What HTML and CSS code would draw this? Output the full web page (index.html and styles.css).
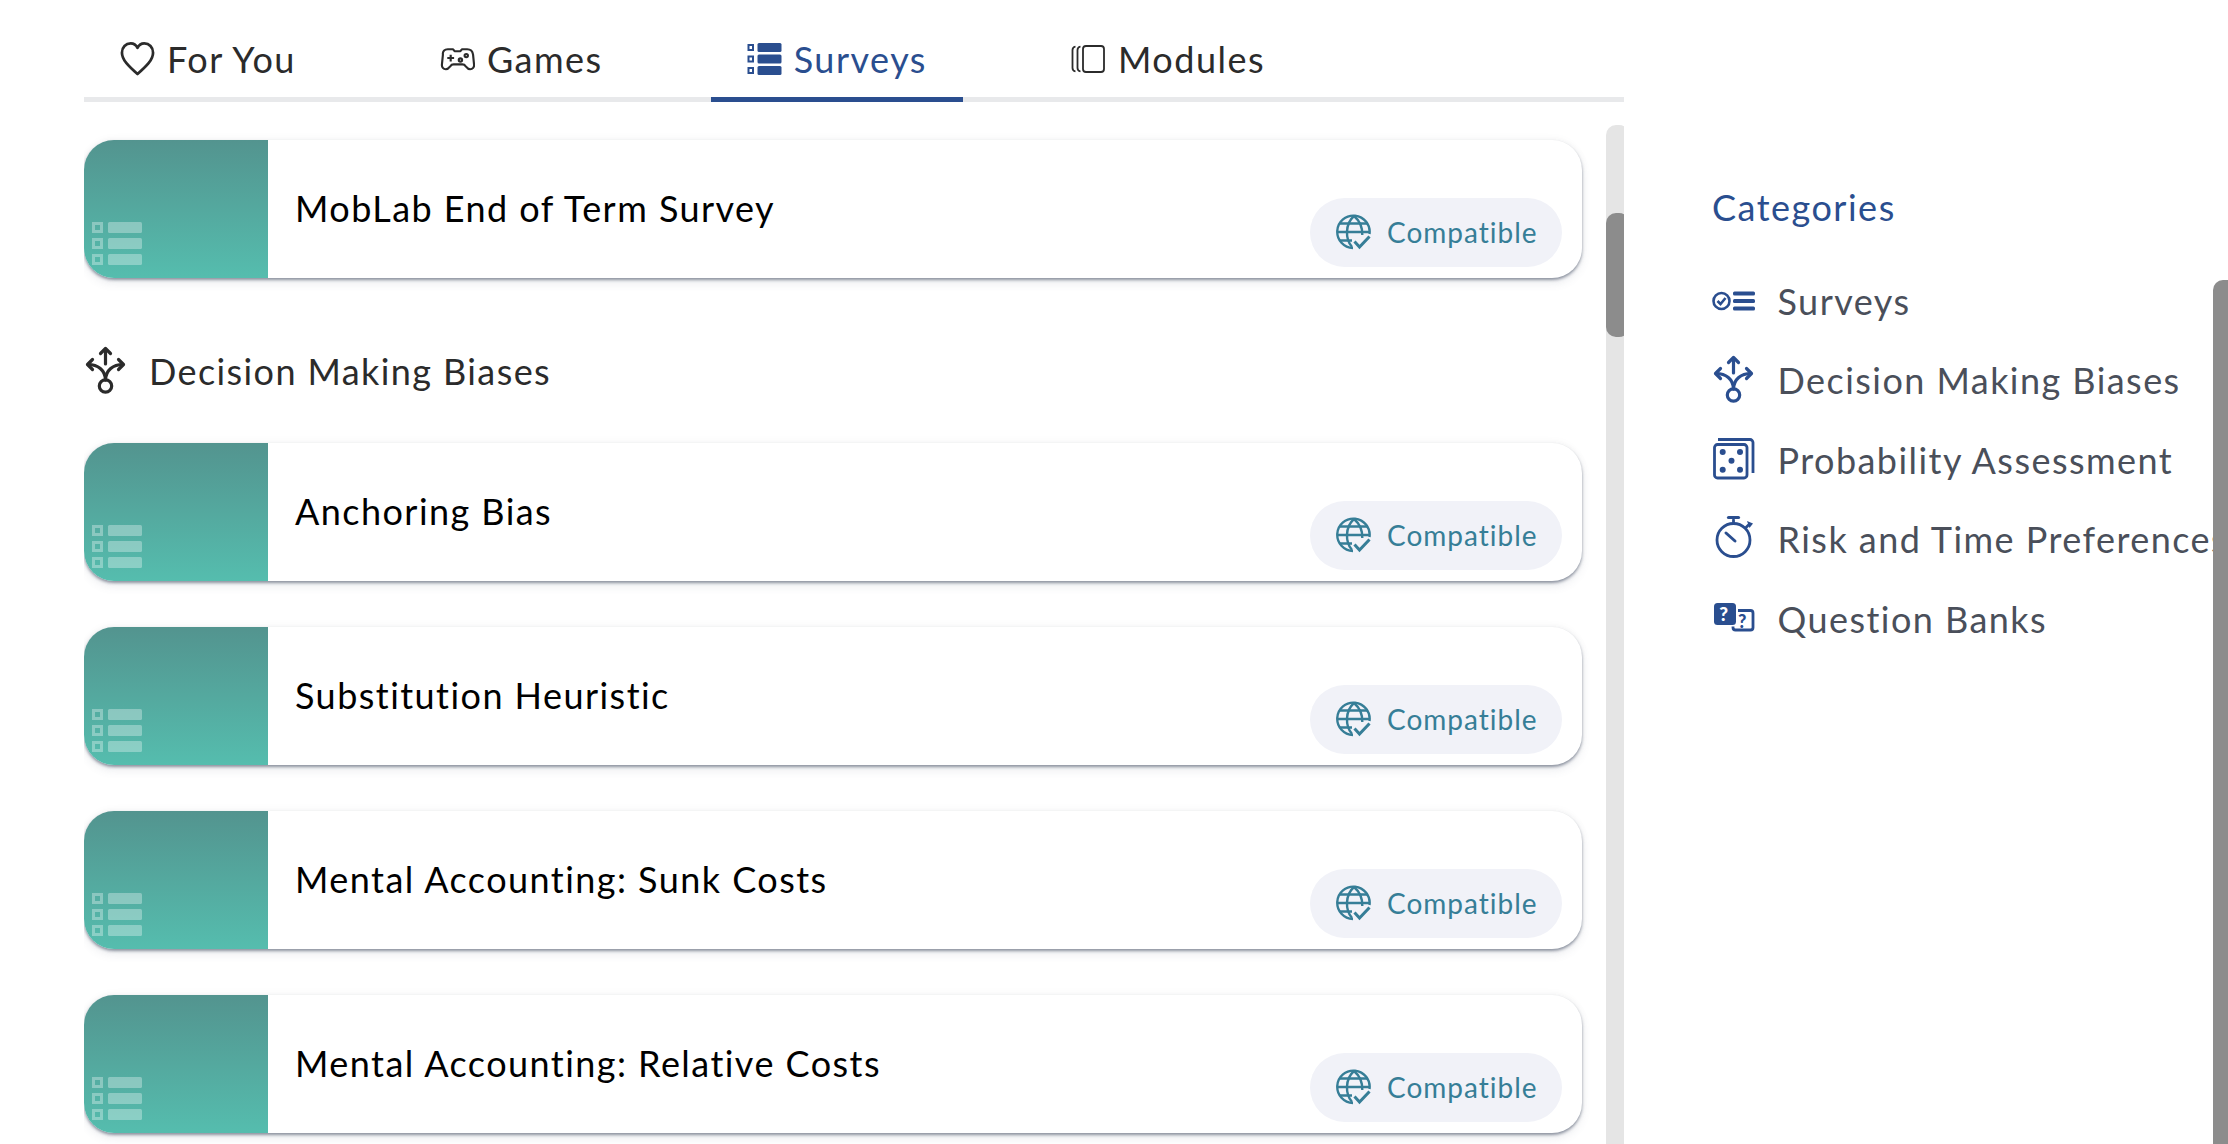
FILE: index.html
```html
<!DOCTYPE html>
<html lang="en">
<head>
<meta charset="utf-8">
<title>Surveys</title>
<link rel="stylesheet" href="styles.css">
</head>
<body>
<svg class="sprite" aria-hidden="true">
  <symbol id="i-split" viewBox="0 0 44 50">
    <g fill="none" stroke="currentColor" stroke-width="3.200" stroke-linecap="round" stroke-linejoin="round">
      <circle cx="21.500" cy="40" r="6.200"/>
      <path d="M21.500 33.800C21 24 14 18.500 4 18.500"/>
      <path d="M21.500 33.800C22 24 29 18.500 39 18.500"/>
      <path d="M21.500 18V3"/>
      <path d="M16.500 7.500 21.500 2.500 26.500 7.500"/>
      <path d="M8.500 13.500 3.500 18.500l5 5"/>
      <path d="M34.500 13.500 39.500 18.500l-5 5"/>
    </g>
  </symbol>
  <symbol id="i-globe" viewBox="0 0 36 36">
    <g fill="none" stroke="currentColor" stroke-width="2.400">
      <path d="M17 34A16.200 16.200 0 1 1 33.500 20"/>
      <path d="M18 2c-9 8-9 23-2 31"/>
      <path d="M18 2c6 5 8.500 12 8.300 19"/>
      <path d="M4 9.500h28M1.500 18h32M4 26.500h12"/>
      <path d="M18.500 27.500l5 5.500 10-10.500" stroke-width="3"/>
    </g>
  </symbol>
  <symbol id="i-thumb" viewBox="0 0 50 43">
    <g fill="#fff" fill-opacity=".32">
      <path fill-rule="evenodd" d="M0 0h11v11H0zM3 3v5h5V3z"/>
      <path fill-rule="evenodd" d="M0 16h11v11H0zM3 19v5h5v-5z"/>
      <path fill-rule="evenodd" d="M0 32h11v11H0zM3 35v5h5v-5z"/>
      <rect x="16" y="0" width="34" height="11" rx="1.500"/>
      <rect x="16" y="16" width="34" height="11" rx="1.500"/>
      <rect x="16" y="32" width="34" height="11" rx="1.500"/>
    </g>
  </symbol>
</svg>

<div class="page">
  <main class="content">
    <nav class="tabs">
      <a class="tab">
        <svg class="tab-icon" viewBox="0 0 36 36"><path fill="none" stroke="currentColor" stroke-width="2.800" stroke-linejoin="round" d="M18 33.500C9 25.500 2 19 2 11.500 2 6 6 2 11 2c3 0 5.500 1.500 7 4.500C19.500 3.500 22 2 25 2c5 0 9 4 9 9.500 0 7.500-7 14-16 22z"/></svg>
        <span>For You</span>
      </a>
      <a class="tab">
        <svg class="tab-icon" viewBox="0 0 36 36"><g fill="none" stroke="currentColor" stroke-width="2.200" stroke-linejoin="round"><path d="M8 8h5.500l1.500 2h6l1.500-2H28c3.500 0 5.500 2 6 5.500l1 10c.4 3-1.500 5-4 5-2 0-3-1-4.500-3-1-1.500-2-2-3.500-2h-9c-1.500 0-2.500.5-3.500 2-1.500 2-2.500 3-4.500 3-2.500 0-4.400-2-4-5l1-10C2.500 10 4.500 8 8 8z"/><path d="M7.500 17h7M11 13.500v7"/><circle cx="21" cy="19" r="1.700"/><circle cx="27" cy="14.500" r="1.700"/></g></svg>
        <span>Games</span>
      </a>
      <a class="tab tab-active">
        <svg class="tab-icon" viewBox="0 0 34 36"><g fill="currentColor"><path fill-rule="evenodd" d="M0 3h6.500v7H0zM2 5v3h2.500V5z"/><path fill-rule="evenodd" d="M0 14.500h6.500v7H0zM2 16.500v3h2.500v-3z"/><path fill-rule="evenodd" d="M0 26h6.500v7H0zM2 28v3h2.500v-3z"/><rect x="10" y="2" width="24" height="9" rx="1.500"/><rect x="10" y="13.500" width="24" height="9" rx="1.500"/><rect x="10" y="25" width="24" height="9" rx="1.500"/></g></svg>
        <span>Surveys</span>
      </a>
      <a class="tab">
        <svg class="tab-icon" viewBox="0 0 34 36"><g fill="none" stroke="currentColor" stroke-width="1.800" stroke-linejoin="round"><rect x="11.500" y="5" width="21" height="26" rx="3"/><path d="M4 5.500C2 6 1 7 1 9v18c0 2 1 3 3 3.500"/><path d="M9 5.500C7 6 6 7 6 9v18c0 2 1 3 3 3.500"/></g></svg>
        <span>Modules</span>
      </a>
    </nav>

    <div class="scroller">
      <div class="list">
        <article class="card">
          <div class="thumb"><svg class="thumb-icon"><use href="#i-thumb"/></svg></div>
          <div class="card-body">
            <h3 class="card-title">MobLab End of Term Survey</h3>
            <span class="pill"><svg class="pill-icon"><use href="#i-globe"/></svg>Compatible</span>
          </div>
        </article>

        <h2 class="section-title"><svg class="section-icon"><use href="#i-split"/></svg>Decision Making Biases</h2>

        <div class="cards">
          <article class="card">
            <div class="thumb"><svg class="thumb-icon"><use href="#i-thumb"/></svg></div>
            <div class="card-body">
              <h3 class="card-title">Anchoring Bias</h3>
              <span class="pill"><svg class="pill-icon"><use href="#i-globe"/></svg>Compatible</span>
            </div>
          </article>
          <article class="card">
            <div class="thumb"><svg class="thumb-icon"><use href="#i-thumb"/></svg></div>
            <div class="card-body">
              <h3 class="card-title">Substitution Heuristic</h3>
              <span class="pill"><svg class="pill-icon"><use href="#i-globe"/></svg>Compatible</span>
            </div>
          </article>
          <article class="card">
            <div class="thumb"><svg class="thumb-icon"><use href="#i-thumb"/></svg></div>
            <div class="card-body">
              <h3 class="card-title">Mental Accounting: Sunk Costs</h3>
              <span class="pill"><svg class="pill-icon"><use href="#i-globe"/></svg>Compatible</span>
            </div>
          </article>
          <article class="card">
            <div class="thumb"><svg class="thumb-icon"><use href="#i-thumb"/></svg></div>
            <div class="card-body">
              <h3 class="card-title">Mental Accounting: Relative Costs</h3>
              <span class="pill"><svg class="pill-icon"><use href="#i-globe"/></svg>Compatible</span>
            </div>
          </article>
        </div>
      </div>
      <div class="track"><div class="thumbbar"></div></div>
    </div>
  </main>

  <aside class="sidebar">
    <h2 class="side-title">Categories</h2>
    <ul class="side-list">
      <li class="side-item">
        <svg class="side-icon" viewBox="0 0 44 50"><g fill="none" stroke="currentColor"><circle cx="9.500" cy="25" r="8" stroke-width="2.600"/><path d="M5.500 25l3 3 5-6" stroke-width="2.600"/></g><g fill="currentColor"><rect x="21" y="15.500" width="22" height="4" rx="1.500"/><rect x="21" y="23" width="22" height="4" rx="1.500"/><rect x="21" y="30.500" width="22" height="4" rx="1.500"/></g></svg>
        <span>Surveys</span>
      </li>
      <li class="side-item">
        <svg class="side-icon"><use href="#i-split"/></svg>
        <span>Decision Making Biases</span>
      </li>
      <li class="side-item">
        <svg class="side-icon" viewBox="0 0 44 50"><g fill="none" stroke="currentColor" stroke-width="2.800" stroke-linejoin="round"><rect x="2.500" y="9.500" width="32.500" height="33.500" rx="3"/><path d="M6 4.500h32a3 3 0 0 1 3 3V38"/></g><g fill="currentColor"><circle cx="10.700" cy="17" r="3"/><circle cx="28" cy="17" r="3"/><circle cx="19.500" cy="25.700" r="3"/><circle cx="10.700" cy="34.700" r="3"/><circle cx="28" cy="34.700" r="3"/></g></svg>
        <span>Probability Assessment</span>
      </li>
      <li class="side-item">
        <svg class="side-icon" viewBox="0 0 44 50"><g fill="none" stroke="currentColor" stroke-width="2.800" stroke-linecap="round"><circle cx="21.500" cy="26" r="16.500"/><path d="M21.500 6V9"/><path d="M16.500 3.500h10" stroke-width="3.200"/><path d="M14 19l9 8" stroke-width="3"/><path d="M33.500 14l3-3"/></g><path fill="currentColor" d="M35 7l6 2.500-3.500 4.500z"/></svg>
        <span>Risk and Time Preferences</span>
      </li>
      <li class="side-item">
        <svg class="side-icon" viewBox="0 0 44 50"><rect x="2" y="9" width="22" height="22" rx="3.500" fill="currentColor"/><path fill="none" stroke="currentColor" stroke-width="2.800" stroke-linejoin="round" d="M26 16.500h12.500a2.500 2.500 0 0 1 2.500 2.500v14.500a2.500 2.500 0 0 1-2.500 2.500H23.500a2.500 2.500 0 0 1-2.500-2.500v-1"/><text class="q-dark" x="12.500" y="27">?</text><text class="q-light" x="31" y="33.500">?</text></svg>
        <span>Question Banks</span>
      </li>
    </ul>
  </aside>
</div>
<div class="window-scroll"></div>
</body>
</html>
```
FILE: styles.css
```css
* { box-sizing: border-box; }
html, body { margin: 0; height: 100%; overflow: hidden; background: #fff; }
body { font-family: "Lato", "Liberation Sans", sans-serif; color: #212121; }
h2, h3, ul { margin: 0; padding: 0; font-weight: 400; }
ul { list-style: none; }

.sprite { position: absolute; width: 0; height: 0; overflow: hidden; }

.page { display: flex; height: 1144px; padding-left: 84px; }
.content { width: 1540px; flex: none; display: flex; flex-direction: column; }

.tabs { display: flex; gap: 72px; height: 102px; border-bottom: 5px solid #e8e9eb; }
.tab { display: flex; align-items: center; gap: 12px; height: 102px; padding: 20px 36px 0; border-bottom: 5px solid transparent; font-size: 36px; letter-spacing: 1.500px; color: #2b2b2b; }
.tab-active { color: #2a4e8f; border-bottom-color: #2a4e8f; }
.tab-icon { width: 35px; height: 36px; flex: none; }

.scroller { display: flex; margin-top: 23px; height: 1019px; overflow: hidden; }
.list { width: 1498px; flex: none; padding-top: 15px; }
.cards { display: flex; flex-direction: column; gap: 46px; }

.card { display: flex; height: 138px; border-radius: 30px; background: #fff; box-shadow: 0 2px 3px rgba(80,90,110,.6), 0 5px 10px rgba(90,100,120,.12), 0 -1px 8px rgba(0,0,0,.04); }
.thumb { width: 184px; flex: none; display: flex; align-items: flex-end; padding: 0 0 13px 8px; border-radius: 30px 0 0 30px; background: linear-gradient(180deg, #53948f, #55bdae); }
.thumb-icon { width: 50px; height: 43px; }
.card-body { flex: 1; display: flex; justify-content: space-between; padding-left: 27px; }
.card-title { align-self: center; padding-bottom: 2px; font-size: 36px; letter-spacing: 1.450px; color: #000; }
.pill { align-self: flex-end; display: flex; align-items: center; gap: 15px; width: 252px; height: 69px; margin: 0 20px 11px 0; padding: 0 0 2px 26px; border-radius: 35px; background: #f1f2f8; font-size: 28px; letter-spacing: 1px; color: #367e97; }
.pill-icon { width: 36px; height: 36px; flex: none; }

.section-title { display: flex; align-items: center; gap: 21px; height: 46px; margin: 70px 0 49px; font-size: 36px; letter-spacing: 1.400px; color: #2b2b2b; }
.section-icon { width: 44px; height: 50px; flex: none; color: #2b2b2b; }

.track { position: relative; width: 23px; margin-left: 24px; flex: none; background: #e5e5e5; border-radius: 10px 10px 0 0; }
.thumbbar { position: absolute; left: 0; top: 88px; width: 23px; height: 124px; border-radius: 10px; background: #8c8c8c; }

.sidebar { width: 604px; flex: none; padding: 184px 0 0 88px; white-space: nowrap; }
.side-title { font-size: 36px; line-height: 46px; letter-spacing: 1.500px; color: #2a4e8f; }
.side-list { margin-top: 44px; display: flex; flex-direction: column; gap: 26px; }
.side-item { display: flex; align-items: center; gap: 21.500px; height: 53.500px; font-size: 36px; letter-spacing: 1.450px; color: #4a4f5a; }
.side-icon { width: 44px; height: 50px; flex: none; color: #2a4e8f; }
.q-dark, .q-light { font-family: "Lato", sans-serif; font-weight: 900; text-anchor: middle; }
.q-dark { font-size: 19px; fill: #fff; }
.q-light { font-size: 18px; fill: #2a4e8f; }

.window-scroll { position: absolute; right: 0; top: 280px; width: 15px; height: 864px; background: #8c8c8c; border-radius: 10px 0 0 0; }
```
